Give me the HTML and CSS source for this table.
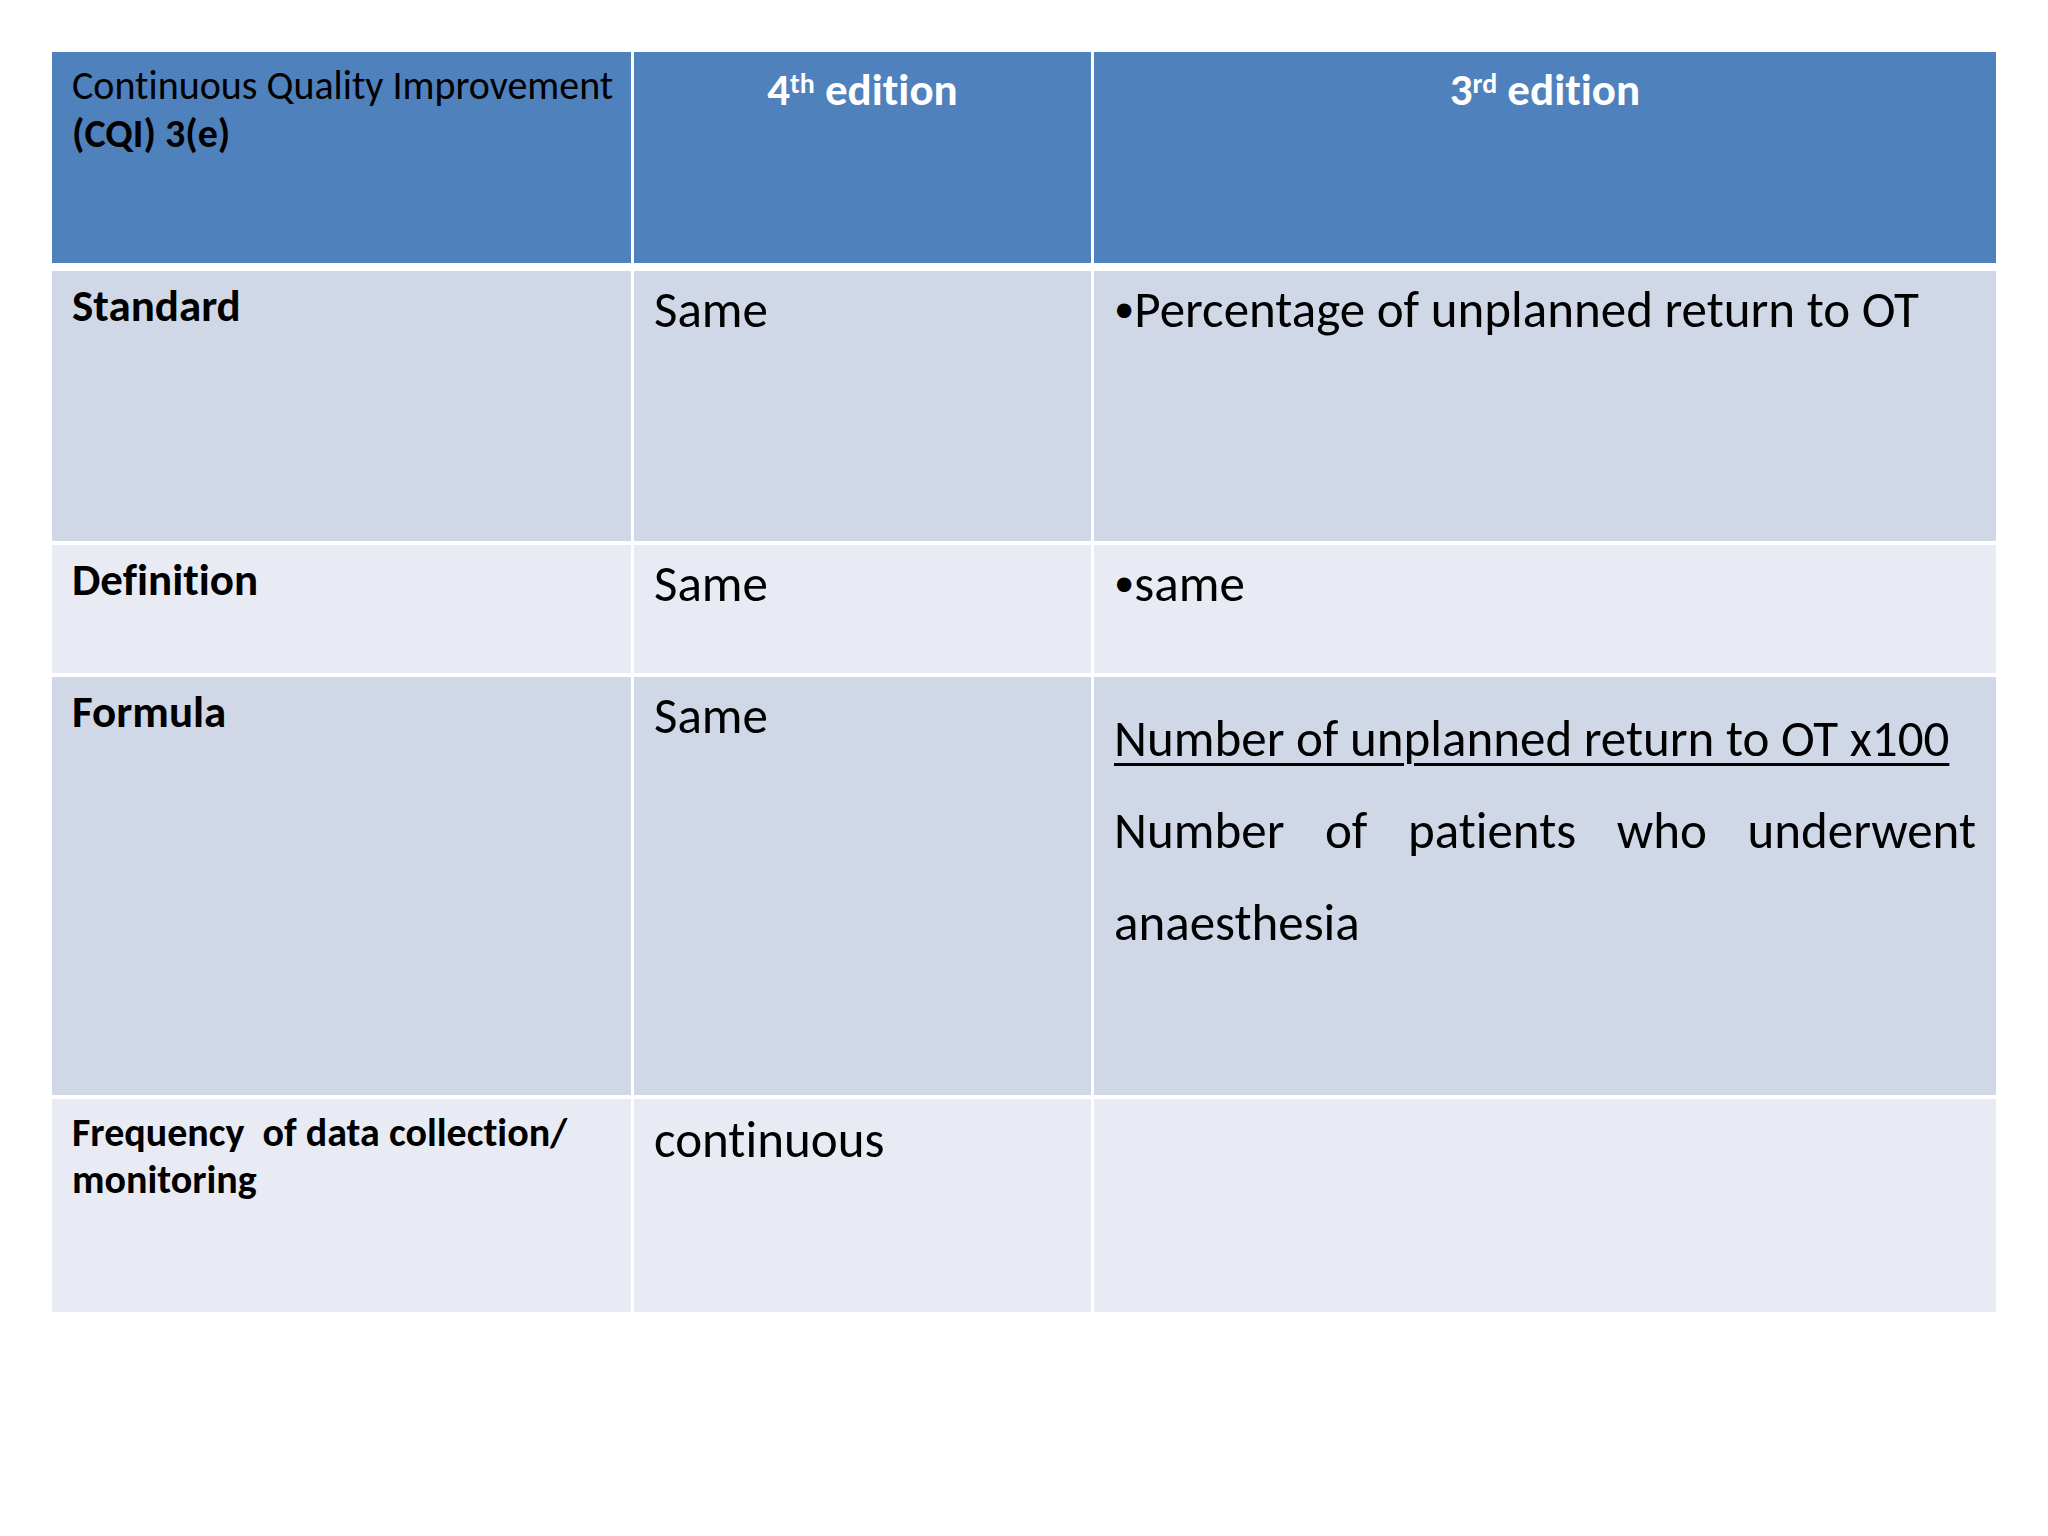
FILE: index.html
```html
<!DOCTYPE html>
<html lang="en">
<head>
<meta charset="utf-8">
<title>CQI 3(e)</title>
<link rel="stylesheet" href="styles.css">
</head>
<body>
<div class="page">
  <div class="table">
    <div class="cell hd hd-first"><span class="nowrap">Continuous Quality Improvement</span><br><b>(CQI) 3(e)</b></div>
    <div class="cell hd hd-center">4<sup>th</sup> edition</div>
    <div class="cell hd hd-center">3<sup>rd</sup> edition</div>

    <div class="cell band label">Standard</div>
    <div class="cell band body">Same</div>
    <div class="cell band body"><span class="bullet">•</span>Percentage of unplanned return to OT</div>

    <div class="cell plain label">Definition</div>
    <div class="cell plain body">Same</div>
    <div class="cell plain body"><span class="bullet">•</span>same</div>

    <div class="cell band label">Formula</div>
    <div class="cell band body">Same</div>
    <div class="cell band formula">
      <div class="num">Number of unplanned return to OT x100</div>
      <div class="jline">Number of patients who underwent</div>
      <div class="fline">anaesthesia</div>
    </div>

    <div class="cell plain label small">Frequency&nbsp; of data collection/<br>monitoring</div>
    <div class="cell plain body cont">continuous</div>
    <div class="cell plain body"></div>
  </div>
</div>
</body>
</html>
```

FILE: styles.css
```css
html, body {
  margin: 0;
  padding: 0;
  background: #ffffff;
}

body {
  width: 2048px;
  height: 1536px;
  font-family: Carlito, "Lato", "Liberation Sans", sans-serif;
  font-variant-ligatures: none;
  color: #000000;
}

.page {
  padding: 52px 0 0 52px;
}

.table {
  display: grid;
  grid-template-columns: 579px 457px 902px;
  grid-template-rows: 215px 270px 128px 418px 213px;
  column-gap: 3px;
  row-gap: 4px;
  width: 1944px;
}

.cell {
  box-sizing: border-box;
  padding: 10px 20px;
}

.hd {
  background: #4f81bd;
  margin-bottom: 4px;
}

.hd-first {
  font-size: 40px;
  line-height: 48px;
  padding-top: 10px;
}

.nowrap {
  white-space: nowrap;
}

.hd-center {
  text-align: center;
  color: #ffffff;
  font-weight: bold;
  font-size: 45px;
  line-height: 60px;
  padding-top: 8px;
}

.hd-center sup {
  font-size: 0.62em;
  line-height: 0;
  vertical-align: 0.42em;
}

.band {
  background: #d0d8e8;
}

.plain {
  background: #e9ebf4;
}

.label {
  font-weight: bold;
  font-size: 45px;
  line-height: 56px;
  padding-top: 7px;
}

.label.small {
  font-size: 40px;
  line-height: 47px;
  padding-top: 10px;
}

.body {
  font-size: 51px;
  line-height: 62px;
  padding-top: 8px;
}

.body.cont {
  padding-top: 10px;
}

.bullet {
  font-size: 0.8em;
  vertical-align: 0.12em;
  line-height: 0;
}

.formula {
  font-size: 51px;
  line-height: 92px;
  padding-top: 16px;
}

.num {
  text-decoration: underline;
  text-decoration-thickness: 3px;
  text-underline-offset: 7px;
  white-space: nowrap;
}

.jline {
  text-align: justify;
  text-align-last: justify;
  white-space: nowrap;
}
```
